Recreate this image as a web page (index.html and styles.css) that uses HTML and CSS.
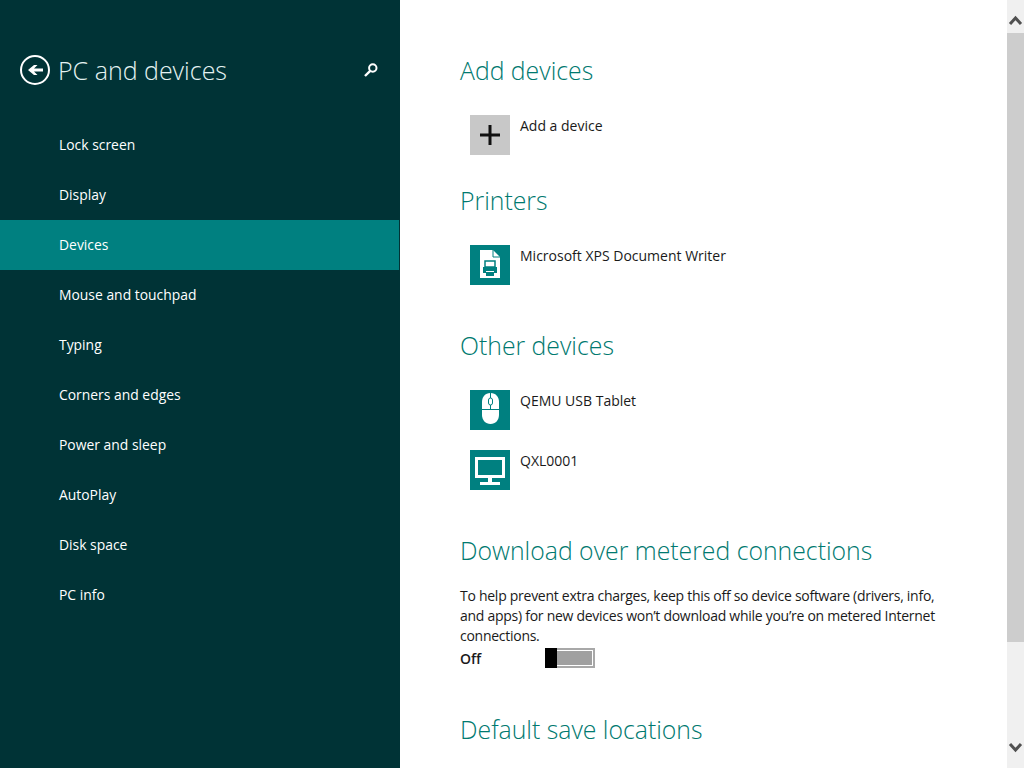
FILE: index.html
```html
<!DOCTYPE html>
<html lang="en">
<head>
    <meta charset="UTF-8">
    <meta name="viewport" content="width=device-width, initial-scale=1.0">
    <title>PC and devices</title>
    <link rel="stylesheet" href="styles.css">
</head>
<body>
    <div class="sidebar">
        <div class="sidebar-head">
            <svg class="back" width="32" height="32" viewBox="0 0 32 32">
                <circle cx="16" cy="16" r="14" fill="none" stroke="#ffffff" stroke-width="2"/>
                <path d="M24 14.500H15L18.500 11H15L9 16L15 21H18.500L15 17.500H24Z" fill="#ffffff"/>
            </svg>
            <h1>PC and devices</h1>
            <svg class="search" width="16" height="16" viewBox="0 0 16 16">
                <circle cx="9.800" cy="6" r="3.700" fill="none" stroke="#ffffff" stroke-width="2"/>
                <path d="M7.200 8.800L2 14" fill="none" stroke="#ffffff" stroke-width="2.400"/>
            </svg>
        </div>
        <div class="nav">
            <div class="nav-item">Lock screen</div>
            <div class="nav-item">Display</div>
            <div class="nav-item selected">Devices</div>
            <div class="nav-item">Mouse and touchpad</div>
            <div class="nav-item">Typing</div>
            <div class="nav-item">Corners and edges</div>
            <div class="nav-item">Power and sleep</div>
            <div class="nav-item">AutoPlay</div>
            <div class="nav-item">Disk space</div>
            <div class="nav-item">PC info</div>
        </div>
    </div>

    <div class="main">
        <h2 class="first">Add devices</h2>
        <div class="device">
            <div class="tile grey">
                <svg width="40" height="40" viewBox="0 0 40 40">
                    <path d="M18.500 10H21.500V18.500H30V21.500H21.500V30H18.500V21.500H10V18.500H18.500Z" fill="#111111"/>
                </svg>
            </div>
            <div class="device-name">Add a device</div>
        </div>

        <h2 class="printers">Printers</h2>
        <div class="device">
            <div class="tile">
                <svg width="40" height="40" viewBox="0 0 40 40">
                    <path d="M10 5H23L30 12V33H10Z" fill="#ffffff"/>
                    <path d="M23 5V12H30" fill="none" stroke="#008080" stroke-width="1"/>
                    <path d="M15 16H25V22H15Z" fill="none" stroke="#008080" stroke-width="1.500"/>
                    <path d="M13 22H27V28H24V26H16V28H13Z" fill="#008080"/>
                    <path d="M16 27H24V31H16Z" fill="#008080"/>
                </svg>
            </div>
            <div class="device-name">Microsoft XPS Document Writer</div>
        </div>

        <h2 class="others">Other devices</h2>
        <div class="device">
            <div class="tile">
                <svg width="40" height="40" viewBox="0 0 40 40">
                    <path d="M20.500 3C15 3 12 7 12 12V25C12 30 15.500 34 20.500 34C25.500 34 29 30 29 25V12C29 7 26 3 20.500 3Z" fill="#ffffff"/>
                    <path d="M12 19.500H29" stroke="#008080" stroke-width="1"/>
                    <path d="M20.500 3V19.500" stroke="#008080" stroke-width="1"/>
                    <rect x="18.500" y="8" width="4" height="7" rx="2" fill="#ffffff" stroke="#008080" stroke-width="1"/>
                </svg>
            </div>
            <div class="device-name">QEMU USB Tablet</div>
        </div>
        <div class="device second">
            <div class="tile">
                <svg width="40" height="40" viewBox="0 0 40 40">
                    <path d="M5 7H35V28H5ZM8 10V25H32V10Z" fill="#ffffff" fill-rule="evenodd"/>
                    <path d="M18 28H22V32H30V35H10V32H18Z" fill="#ffffff"/>
                </svg>
            </div>
            <div class="device-name">QXL0001</div>
        </div>

        <h2 class="metered">Download over metered connections</h2>
        <p class="note">To help prevent extra charges, keep this off so device software (drivers, info, and apps) for new devices won’t download while you’re on metered Internet connections.</p>
        <div class="toggle-row">
            <span class="toggle-label">Off</span>
            <div class="toggle"><div class="toggle-thumb"></div></div>
        </div>

        <h2 class="save">Default save locations</h2>
    </div>

    <div class="scrollbar">
        <div class="arrow">
            <svg width="17" height="33" viewBox="0 0 17 33"><path d="M3 24L8.500 18L14 24" fill="none" stroke="#505050" stroke-width="3"/></svg>
        </div>
        <div class="scroll-thumb"></div>
        <div class="scroll-track"></div>
        <div class="arrow">
            <svg width="17" height="33" viewBox="0 0 17 33"><path d="M3 9L8.500 15L14 9" fill="none" stroke="#505050" stroke-width="3"/></svg>
        </div>
    </div>
</body>
</html>
```

FILE: styles.css
```css
html, body {
    height: 100%;
}
body {
    margin: 0;
    display: flex;
    height: 768px;
    overflow: hidden;
    background-color: #ffffff;
    font-family: "Open Sans", "Noto Sans", sans-serif;
    font-size: 14px;
    color: #1a1a1a;
}
.sidebar {
    width: 400px;
    flex-shrink: 0;
    background-color: #003336;
    color: #ffffff;
}
.sidebar-head {
    display: flex;
    align-items: center;
    padding: 35px 21px 15px 19px;
    box-sizing: border-box;
    height: 120px;
}
.back {
    flex-shrink: 0;
}
.sidebar-head h1 {
    flex: 1;
    margin: 0 0 0 7px;
    font-size: 25px;
    font-weight: 300;
    color: #e4f2f2;
}
.nav {
    display: flex;
    flex-direction: column;
}
.nav-item {
    height: 50px;
    line-height: 50px;
    padding-left: 59px;
    margin-right: 1px;
    font-size: 13.900px;
}
.nav-item.selected {
    background-color: #008080;
}
.main {
    flex: 1;
    padding: 0 60px;
    overflow: hidden;
}
h2 {
    margin: 0;
    font-size: 24.800px;
    font-weight: 300;
    line-height: 36px;
    color: #00796f;
}
h2.first {
    margin-top: 52px;
}
h2.printers {
    margin-top: 27px;
}
h2.others {
    margin-top: 42px;
}
h2.metered {
    margin-top: 42px;
}
h2.save {
    margin-top: 43px;
}
.device {
    display: flex;
    margin: 27px 0 0 10px;
}
.device.second {
    margin-top: 20px;
}
.tile {
    width: 40px;
    height: 40px;
    flex-shrink: 0;
    background-color: #008080;
}
.tile.grey {
    background-color: #c8c8c8;
}
.tile svg {
    display: block;
}
.device-name {
    margin-left: 10px;
    padding-top: 1px;
    line-height: 20px;
}
.note {
    margin: 18px 0 0;
    line-height: 20px;
    width: 490px;
    letter-spacing: -0.270px;
}
.toggle-row {
    display: flex;
    align-items: center;
    margin-top: 2px;
}
.toggle-label {
    width: 85px;
    font-weight: 600;
}
.toggle {
    width: 50px;
    height: 20px;
    box-sizing: border-box;
    border: 2px solid #a8a8a8;
    background-color: #a0a0a0;
    position: relative;
    box-shadow: inset 0 0 0 1px #ffffff;
}
.toggle-thumb {
    position: absolute;
    left: -2px;
    top: -2px;
    width: 12px;
    height: 20px;
    background-color: #000000;
}
.scrollbar {
    width: 17px;
    flex-shrink: 0;
    display: flex;
    flex-direction: column;
    background-color: #f0f0f0;
}
.arrow {
    height: 33px;
    flex-shrink: 0;
}
.arrow svg {
    display: block;
}
.scroll-thumb {
    height: 609px;
    background-color: #cdcdcd;
}
.scroll-track {
    flex: 1;
}
```
